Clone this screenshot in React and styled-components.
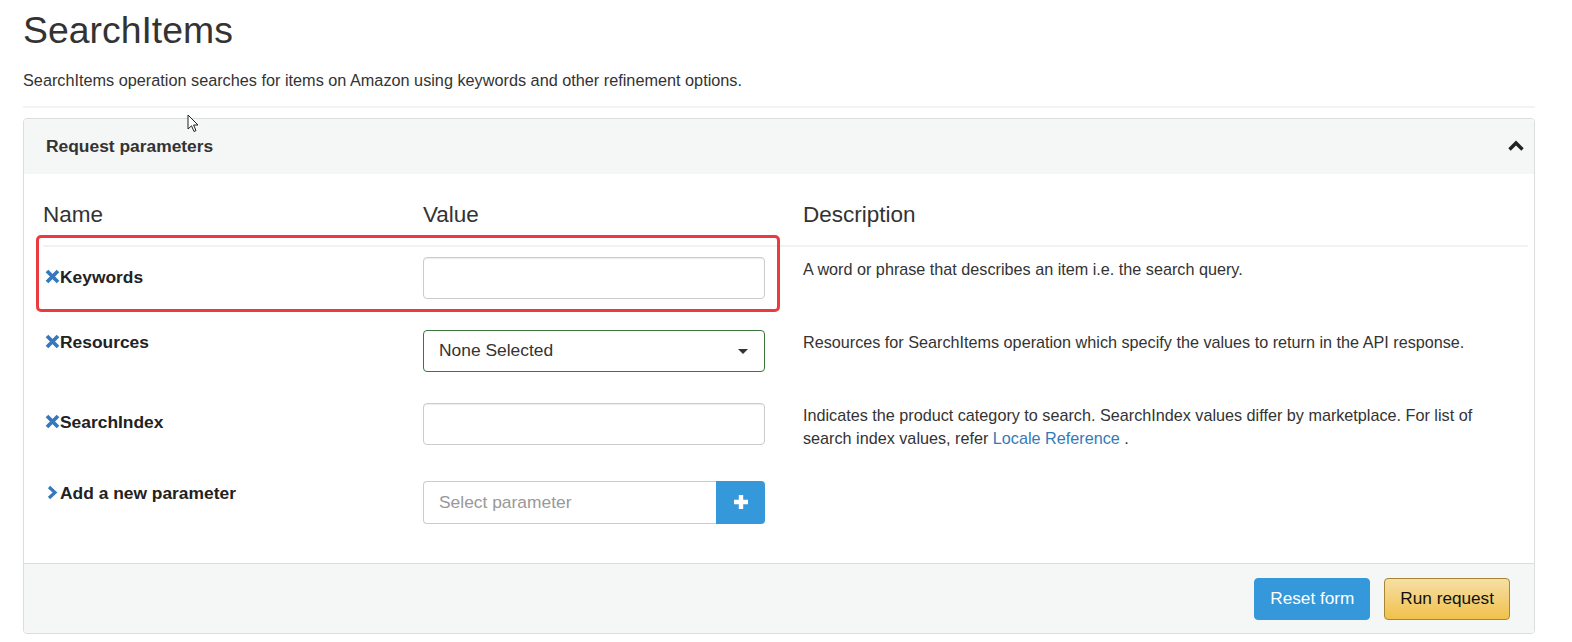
import React from 'react'
import styled, { createGlobalStyle } from 'styled-components'

const GlobalStyle = createGlobalStyle`
  html, body { overflow: hidden; }
  body {
    margin: 0;
    background: #fff;
    font-family: "Liberation Sans", Arial, sans-serif;
    color: #333;
  }
  * { box-sizing: border-box; }
`

const Page = styled.div`
  position: relative;
  padding: 10px 37px 0 23px;
`

const Title = styled.h1`
  margin: 0;
  font-size: 37.4px;
  font-weight: 400;
  line-height: 1.1;
  color: #333;
`

const Lead = styled.p`
  margin: 17px 0 0;
  font-size: 16.25px;
  line-height: 24.8px;
`

const Divider = styled.hr`
  margin: 13px 0 10px;
  border: 0;
  border-top: 2px solid #f3f3f3;
`

const Panel = styled.section`
  border: 1px solid #ddd;
  border-radius: 4px;
  overflow: hidden;
`

const PanelHeader = styled.header`
  height: 55px;
  display: flex;
  align-items: center;
  justify-content: space-between;
  padding: 0 9px 0 22px;
  background: #f5f6f6;
  font-size: 17.4px;
  font-weight: 700;
  color: #333;
`

const PanelBody = styled.div`
  padding: 29px 6px 18px 19px;
`

const Columns = styled.div`
  display: grid;
  grid-template-columns: 380px 380px 1fr;
`

const HeadRow = styled(Columns)`
  padding-bottom: 18px;
  border-bottom: 2px solid #f2f2f2;
`

const HeadCell = styled.div`
  font-size: 22.5px;
  line-height: 24px;
  color: #333;
`

const Row = styled(Columns)`
  position: relative;
  align-items: start;
  padding: 10px 0 21px;
`

const Label = styled.div`
  display: flex;
  align-items: center;
  margin-top: ${p => p.$offset || 0}px;
  font-size: 17.4px;
  font-weight: 700;
  line-height: 24px;
  color: #222;
  svg { flex: none; margin-left: 2px; }
`

const TextInput = styled.div`
  width: 342px;
  height: 42px;
  border: 1px solid ${p => (p.$success ? '#3c763d' : '#ccc')};
  border-radius: 4px;
  background: #fff;
  box-shadow: inset 0 1px 1px rgba(0, 0, 0, .075);
`

const SelectBox = styled(TextInput)`
  display: flex;
  align-items: center;
  justify-content: space-between;
  padding: 0 16px 0 15px;
  font-size: 17.4px;
  color: #333;
  box-shadow: none;
`

const Caret = styled.span`
  width: 0;
  height: 0;
  border-left: 5px solid transparent;
  border-right: 5px solid transparent;
  border-top: 5px solid #333;
  margin-top: 2px;
`

const InputGroup = styled.div`
  display: flex;
  width: 342px;
  height: 43px;
`

const GroupInput = styled.div`
  flex: 1;
  display: flex;
  align-items: center;
  padding: 0 15px;
  border: 1px solid #ccc;
  border-right: 0;
  border-radius: 4px 0 0 4px;
  font-size: 17.4px;
  color: #999;
`

const AddButton = styled.button`
  width: 49px;
  display: flex;
  align-items: center;
  justify-content: center;
  border: 0;
  border-radius: 0 4px 4px 0;
  background: #3498db;
  padding: 0;
`

const Desc = styled.div`
  font-size: 16.2px;
  line-height: 23px;
  color: #333;
  padding: 1px 15px 0 0;
  a { color: #337ab7; text-decoration: none; }
`

const Highlight = styled.div`
  position: absolute;
  top: -12px;
  left: -7px;
  width: 744px;
  height: 77px;
  border: 3px solid #ea3b3f;
  border-radius: 5px;
  pointer-events: none;
`

const PanelFooter = styled.footer`
  display: flex;
  justify-content: flex-end;
  gap: 14px;
  padding: 14px 24px 13px;
  background: #f5f6f6;
  border-top: 1px solid #ddd;
`

const Button = styled.button`
  height: 42px;
  padding: 0 15px;
  border-radius: 4px;
  font-family: inherit;
  font-size: 17.2px;
  border: 1px solid ${p => (p.$amazon ? '#a88734' : '#3498db')};
  color: ${p => (p.$amazon ? '#111' : '#fff')};
  background: ${p => (p.$amazon ? 'linear-gradient(#f7dfa5, #f0c14b)' : '#3498db')};
`

const Cursor = styled.svg`
  position: absolute;
  left: 187px;
  top: 114px;
`

const RemoveIcon = () => (
  <svg width='15' height='15' viewBox='0 0 15 15'>
    <path d='M2 2 L13 13 M13 2 L2 13' stroke='#3578bd' strokeWidth='3.8' />
  </svg>
)

const ChevronRight = () => (
  <svg width='15' height='15' viewBox='0 0 15 15'>
    <path d='M4 2 L10 7.5 L4 13' stroke='#3578bd' strokeWidth='3.2' fill='none' />
  </svg>
)

const params = [
  {
    name: 'Keywords',
    offset: 8,
    desc: 'A word or phrase that describes an item i.e. the search query.',
    highlight: true
  },
  {
    name: 'Resources',
    select: true,
    desc: 'Resources for SearchItems operation which specify the values to return in the API response.'
  },
  {
    name: 'SearchIndex',
    offset: 7,
    desc: (
      <>
        Indicates the product category to search. SearchIndex values differ by marketplace. For list of
        search index values, refer <a href='#'>Locale Reference</a> .
      </>
    )
  }
]

export default function App () {
  return (
    <Page>
      <GlobalStyle />
      <Title>SearchItems</Title>
      <Lead>SearchItems operation searches for items on Amazon using keywords and other refinement options.</Lead>
      <Divider />
      <Panel>
        <PanelHeader>
          Request parameters
          <svg width='18' height='14' viewBox='0 0 18 14'>
            <path d='M2.5 10.5 L9 4 L15.5 10.5' stroke='#222' strokeWidth='3.4' fill='none' />
          </svg>
        </PanelHeader>
        <PanelBody>
          <HeadRow>
            <HeadCell>Name</HeadCell>
            <HeadCell>Value</HeadCell>
            <HeadCell>Description</HeadCell>
          </HeadRow>
          {params.map(p => (
            <Row key={p.name}>
              <Label $offset={p.offset}><RemoveIcon />{p.name}</Label>
              {p.select
                ? <SelectBox $success>None Selected<Caret /></SelectBox>
                : <TextInput />}
              <Desc>{p.desc}</Desc>
              {p.highlight && <Highlight />}
            </Row>
          ))}
          <Row>
            <Label><ChevronRight />Add a new parameter</Label>
            <InputGroup>
              <GroupInput>Select parameter</GroupInput>
              <AddButton aria-label='Add parameter'>
                <svg width='16' height='16' viewBox='0 0 16 16'>
                  <path d='M8 1 V15 M1 8 H15' stroke='#fff' strokeWidth='4.4' />
                </svg>
              </AddButton>
            </InputGroup>
          </Row>
        </PanelBody>
        <PanelFooter>
          <Button>Reset form</Button>
          <Button $amazon>Run request</Button>
        </PanelFooter>
      </Panel>
      <Cursor width='13' height='20' viewBox='0 0 13 20'>
        <path d='M1 1 L1 15 L4.5 11.8 L7 17.5 L9 16.6 L6.6 11 L11 11 Z' fill='#fff' stroke='#222' strokeWidth='1' />
      </Cursor>
    </Page>
  )
}
